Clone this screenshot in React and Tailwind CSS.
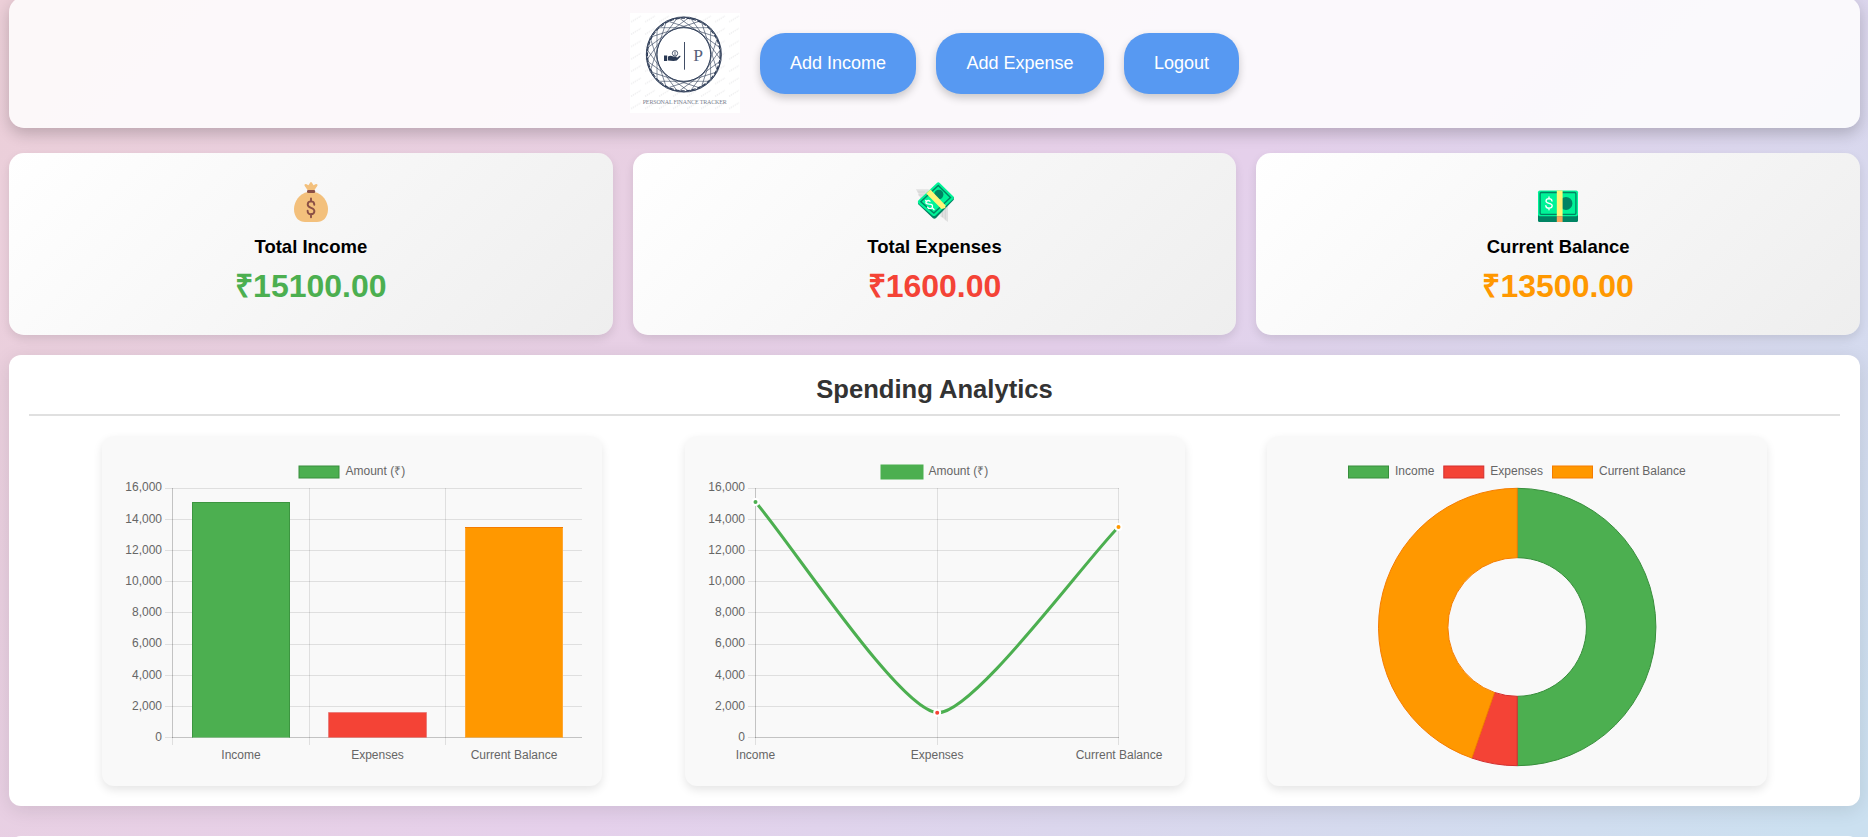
const TICKS = [
  ['16,000', 488.5, 491],
  ['14,000', 519.5, 523],
  ['12,000', 550.5, 554],
  ['10,000', 581.5, 585],
  ['8,000', 612.5, 616],
  ['6,000', 644.5, 647],
  ['4,000', 675.5, 679],
  ['2,000', 706.5, 710],
  ['0', 737.5, 741],
];

function Logo() {
  const chords = Array.from({ length: 20 }, (_, i) => (i * 360) / 20);
  const loops = Array.from({ length: 20 }, (_, i) => ((i + 0.5) * 360) / 20);
  return (
    <svg className="h-[100px] w-[110px]" viewBox="0 0 110 100">
      <defs>
        <pattern id="mark" width="14" height="12.4" patternUnits="userSpaceOnUse">
          <path d="M1 9 L11 3" stroke="#f0f0f1" strokeWidth="1.4" strokeDasharray="1.5 0.7" />
        </pattern>
      </defs>
      <rect width="110" height="100" fill="#fff" />
      <rect width="110" height="100" fill="url(#mark)" />
      <circle cx="53.8" cy="41.5" r="27" fill="#fff" />
      <g fill="none" stroke="#2b3a55">
        <circle cx="53.8" cy="41.5" r="26.9" strokeWidth="0.9" />
        {chords.map((a) => (
          <path key={a} d="M28.5 14.7H79.1" transform={`rotate(${a} 53.8 41.5)`} strokeWidth="0.55" />
        ))}
        {loops.map((a) => (
          <path key={a} d="M42.5 6.5Q53.8 1.2 65.1 6.5" transform={`rotate(${a} 53.8 41.5)`} strokeWidth="0.8" />
        ))}
        <circle cx="53.8" cy="41.5" r="36.3" strokeWidth="1.1" strokeDasharray="4 1.6" />
      </g>
      <path d="M54.5 29V56.7" stroke="#2b3a55" strokeWidth="0.9" />
      <text x="68" y="48.2" textAnchor="middle" fontSize="17.5" fill="#56617a" className="font-['Liberation_Serif',serif]">P</text>
      <path d="M34 42.5h3.2v5.6H34z M38 43.4c2.2-1.4 3.8-.6 5.2.2h3c1 .1.9 1.3 0 1.4h-2.8 3.2l2.6-2c1-.6 1.7.3 1 1.1l-3.4 3.5c-2.6.6-5.6.3-8.8-.1z" fill="#2b3a55" />
      <circle cx="45" cy="40.3" r="2.7" fill="none" stroke="#2b3a55" strokeWidth="0.8" />
      <path d="M45 38.6v3.4" stroke="#2b3a55" strokeWidth="0.8" />
      <text x="54.7" y="91" textAnchor="middle" textLength="84" fontSize="6" fill="#7b828f" className="font-['Liberation_Serif',serif]">PERSONAL FINANCE TRACKER</text>
    </svg>
  );
}

function MoneyBag() {
  return (
    <svg className="size-12" viewBox="0 0 48 48">
      <path d="M20.8 14h6.4C35.5 15.5 41 23.5 41 31c0 9-5.5 13-11 13H18C12.5 44 7 40 7 31c0-7.5 5.5-15.5 13.8-17z" fill="#f3c07c" />
      <path d="M20.5 12L17.6 7.8C17 6.5 18.3 5.6 19.5 6.3L21.5 7.2 23.2 4.6Q24 3.6 24.8 4.6L26.5 7.2 28.5 6.3C29.7 5.6 31 6.5 30.4 7.8L27.5 12z" fill="#f3c07c" />
      <rect x="20" y="12" width="8.2" height="3" rx="1.3" fill="#8b4f45" />
      <path d="M24 20.5v3M24 36v3.3M27.3 26.8c0-2-1.4-3.4-3.3-3.4s-3.3 1.3-3.3 3.1c0 4.2 6.7 2.4 6.7 6.6 0 1.9-1.5 3.2-3.4 3.2s-3.4-1.4-3.4-3.5" fill="none" stroke="#8b4f45" strokeWidth="1.9" strokeLinecap="round" />
    </svg>
  );
}

function FlyingMoney() {
  return (
    <svg className="size-12" viewBox="0 0 48 48">
      <path d="M5 11.2H18L12 21 9.5 20.5Q9 18 7 17L7.5 15Q5.5 13 5 11.2z" fill="#e1e1e1" />
      <path d="M6.5 14H14M8 17H13" stroke="#c9c9c9" strokeWidth="0.6" />
      <path d="M29 29L37 27.5V44L34 42 33.5 41 29.5 38.5z" fill="#e1e1e1" />
      <path d="M31.5 31V39M34.3 30V41.5" stroke="#c9c9c9" strokeWidth="0.6" />
      <path d="M42.8 18.5V21.8L24.8 40.3Q23.3 41.2 22 40.3L7 26V24L22.5 36z" fill="#008463" />
      <path d="M25.9 5Q27.3 3.5 28.7 5L42.2 18.2Q43.3 19.6 42.2 21L24.5 37.5Q23 38.7 21.5 37.5L7.3 25.5Q6.2 24 7.3 22.5z" fill="#00f397" />
      <path d="M27.3 7.5L39.5 19.5 22.9 35 9.8 23.7z" fill="none" stroke="#008463" strokeWidth="1.4" />
      <ellipse cx="27.8" cy="16.5" rx="4.6" ry="4.8" fill="#008463" />
      <path d="M15.2 15.5L19.3 11.5 34.4 27.3V30L30.5 31z" fill="#fff478" />
      <path d="M14.7 22.5l1.3 1.3M21.5 30l1.5 1.5M19 23.2c-1.5-1.3-3.8-.7-4.1.9-.5 2.7 4 1.5 5.5 2.3 2 1 1.3 4.2-1.3 4.3-1.3 0-2.1-.8-2.5-1.6" fill="none" stroke="#fff" strokeWidth="1.3" strokeLinecap="round" />
    </svg>
  );
}

function BankNotes() {
  return (
    <svg className="size-12" viewBox="0 0 48 48">
      <path d="M4 34H44V42.5Q44 44 42.5 44H5.5Q4 44 4 42.5z" fill="#008463" />
      <rect x="4" y="12.5" width="40" height="25.7" rx="1.8" fill="#00f397" />
      <rect x="6.1" y="14.5" width="35.8" height="21.8" rx="1.2" fill="none" stroke="#008463" strokeWidth="1.3" />
      <ellipse cx="32" cy="25.4" rx="6.4" ry="6.5" fill="#008463" />
      <rect x="22.8" y="12.5" width="5.8" height="25.7" fill="#fff478" />
      <rect x="22.8" y="38.2" width="5.8" height="5.8" fill="#f9a35c" />
      <path d="M15 19v2M15 30v1.8M18 23c-.2-1.4-1.4-2.3-3-2.3-1.7 0-3 .9-3 2.3 0 3.3 6.2 1.6 6.2 4.8 0 1.5-1.4 2.4-3.2 2.4s-3.1-1-3.2-2.6" fill="none" stroke="#fff" strokeWidth="1.3" strokeLinecap="round" />
    </svg>
  );
}

function NavButton({ width, children }) {
  return (
    <button className={`mt-px flex h-[61px] ${width} items-center justify-center rounded-[25px] bg-[#5799f2] text-[18px] text-white shadow-[0_4px_8px_rgba(0,0,0,0.2)]`}>
      {children}
    </button>
  );
}

function SummaryCard({ icon, title, amount, color }) {
  return (
    <div className="flex h-[182px] flex-1 flex-col items-center rounded-[15px] bg-linear-135 from-white to-[#eeeeee] pt-[25px] shadow-[0_4px_10px_rgba(0,0,0,0.1)]">
      {icon}
      <h3 className="mt-[10px] text-[18.5px] leading-[22px] font-bold text-black">{title}</h3>
      <p className={`mt-[10px] text-[32px] leading-[37px] font-bold ${color}`}>{amount}</p>
    </div>
  );
}

function ChartCard({ viewBox, children }) {
  return (
    <div className="h-[350px] w-[500px] rounded-[12px] bg-[#f9f9f9] shadow-[0_4px_10px_rgba(0,0,0,0.1)]">
      <svg className="block h-[350px] w-[500px] font-['Liberation_Sans',Arial,sans-serif] text-[12px]" viewBox={viewBox}>
        {children}
      </svg>
    </div>
  );
}

function Grid({ left, right, columns }) {
  return (
    <g>
      <g stroke="#000" strokeOpacity="0.1">
        {TICKS.map(([label, y]) => (
          <path key={label} d={`M${left - 7} ${y}H${right}`} />
        ))}
        {columns.map((x) => (
          <path key={x} d={`M${x} 488V745`} />
        ))}
      </g>
      <g stroke="#000" strokeOpacity="0.12">
        <path d={`M${left} 737.5H${right}`} />
        <path d={`M${left + 0.5} 488V738`} />
      </g>
      {TICKS.map(([label, , baseline]) => (
        <text key={label} x={left - 10} y={baseline} textAnchor="end" fill="#666">{label}</text>
      ))}
    </g>
  );
}

function Legend({ x, fill, stroke, width = 1, label }) {
  return (
    <g>
      <rect x={x} y="466" width="40" height="12" fill={fill} stroke={stroke} strokeWidth={width} />
      <text x={x + 46.5} y="475" fill="#666">{label}</text>
    </g>
  );
}

function BarChart() {
  return (
    <ChartCard viewBox="102 436 500 350">
      <Legend x={299} fill="#4caf50" stroke="#388e3c" label="Amount (₹)" />
      <Grid left={172} right={582} columns={[172.5, 309.5, 445.5]} />
      <g>
        <path d="M192 737.5V502H290V737.5Z" fill="#4caf50" />
        <path d="M192.5 737.5V502.5H289.5V737.5" fill="none" stroke="#388e3c" strokeOpacity="0.8" />
        <path d="M328.5 737.5V712.5H426.5V737.5Z" fill="#f44336" />
        <path d="M328.5 737.5V712.5H426.5V737.5" fill="none" stroke="#e57373" strokeOpacity="0.7" />
        <path d="M465 737.5V527H563V737.5Z" fill="#ff9800" />
        <path d="M465.5 737.5V527.5M562.5 527.5V737.5" fill="none" stroke="#ffa733" />
        <path d="M465 527.5H563" stroke="#f57c00" />
      </g>
      <g fill="#666" textAnchor="middle">
        <text x="241" y="759">Income</text>
        <text x="377.5" y="759">Expenses</text>
        <text x="514" y="759">Current Balance</text>
      </g>
    </ChartCard>
  );
}

function LineChart() {
  const points = [
    [755.5, 502, '#4caf50'],
    [937.2, 712.7, '#f44336'],
    [1118.5, 527, '#ff9800'],
  ];
  return (
    <ChartCard viewBox="685 436 500 350">
      <Legend x={882} fill="#4caf50" stroke="#4caf50" width={3} label="Amount (₹)" />
      <Grid left={755} right={1119} columns={[755.5, 937.5, 1118.5]} />
      <path
        d="M755.5 502C791.8 544.3 899.6 710.1 937.2 712.7C972.2 715.1 1082.2 564.1 1118.5 527"
        fill="none"
        stroke="#4caf50"
        strokeWidth="3"
      />
      {points.map(([x, y, fill]) => (
        <circle key={x} cx={x} cy={y} r="3" fill={fill} stroke="#fff" strokeWidth="2" />
      ))}
      <g fill="#666" textAnchor="middle">
        <text x="755.5" y="759">Income</text>
        <text x="937.2" y="759">Expenses</text>
        <text x="1119" y="759">Current Balance</text>
      </g>
    </ChartCard>
  );
}

function DoughnutChart() {
  const arc = (from, to) => {
    const at = (r, a) => `${1517.2 + r * Math.sin(a)} ${627 - r * Math.cos(a)}`;
    return `M${at(138.7, from)}A138.7 138.7 0 0 1 ${at(138.7, to)}L${at(69.3, to)}A69.3 69.3 0 0 0 ${at(69.3, from)}Z`;
  };
  const split = Math.PI * (1 + 3200 / 30200);
  return (
    <ChartCard viewBox="1267 436 500 350">
      <Legend x={1348.5} fill="#4caf50" stroke="#388e3c" label="Income" />
      <Legend x={1443.8} fill="#f44336" stroke="#d32f2f" label="Expenses" />
      <Legend x={1552.5} fill="#ff9800" stroke="#f57c00" label="Current Balance" />
      <path d={arc(0, Math.PI)} fill="#4caf50" stroke="#388e3c" />
      <path d={arc(Math.PI, split)} fill="#f44336" stroke="#d32f2f" />
      <path d={arc(split, 2 * Math.PI)} fill="#ff9800" stroke="#f57c00" />
    </ChartCard>
  );
}

export default function App() {
  return (
    <div className="h-[837px] overflow-hidden bg-[linear-gradient(135deg,#eccfd8_0%,#e5d0eb_52%,#cbe0f0_98%)] pr-[8px] pl-[9px] font-['Liberation_Sans',Arial,sans-serif]">
      <header className="-mt-[3px] flex h-[131px] items-center justify-center gap-5 rounded-[15px] bg-white/85 shadow-[0_6px_15px_rgba(0,0,0,0.2)]">
        <Logo />
        <NavButton width="w-[156px]">Add Income</NavButton>
        <NavButton width="w-[168px]">Add Expense</NavButton>
        <NavButton width="w-[115px]">Logout</NavButton>
      </header>
      <section className="mt-[25px] flex gap-5">
        <SummaryCard icon={<MoneyBag />} title="Total Income" amount="₹15100.00" color="text-[#4caf50]" />
        <SummaryCard icon={<FlyingMoney />} title="Total Expenses" amount="₹1600.00" color="text-[#f44336]" />
        <SummaryCard icon={<BankNotes />} title="Current Balance" amount="₹13500.00" color="text-[#ff9800]" />
      </section>
      <section className="mt-5 h-[451px] rounded-[12px] bg-white px-5 pt-5 shadow-[0_4px_20px_rgba(0,0,0,0.1)]">
        <h2 className="h-[41px] border-b-2 border-[#e0e0e0] text-center text-[25.6px] leading-[29px] font-bold text-[#333]">Spending Analytics</h2>
        <div className="mt-5 flex justify-between px-[73px]">
          <BarChart />
          <LineChart />
          <DoughnutChart />
        </div>
      </section>
      <section className="mt-[30px] h-10 rounded-[12px] bg-white" />
    </div>
  );
}
